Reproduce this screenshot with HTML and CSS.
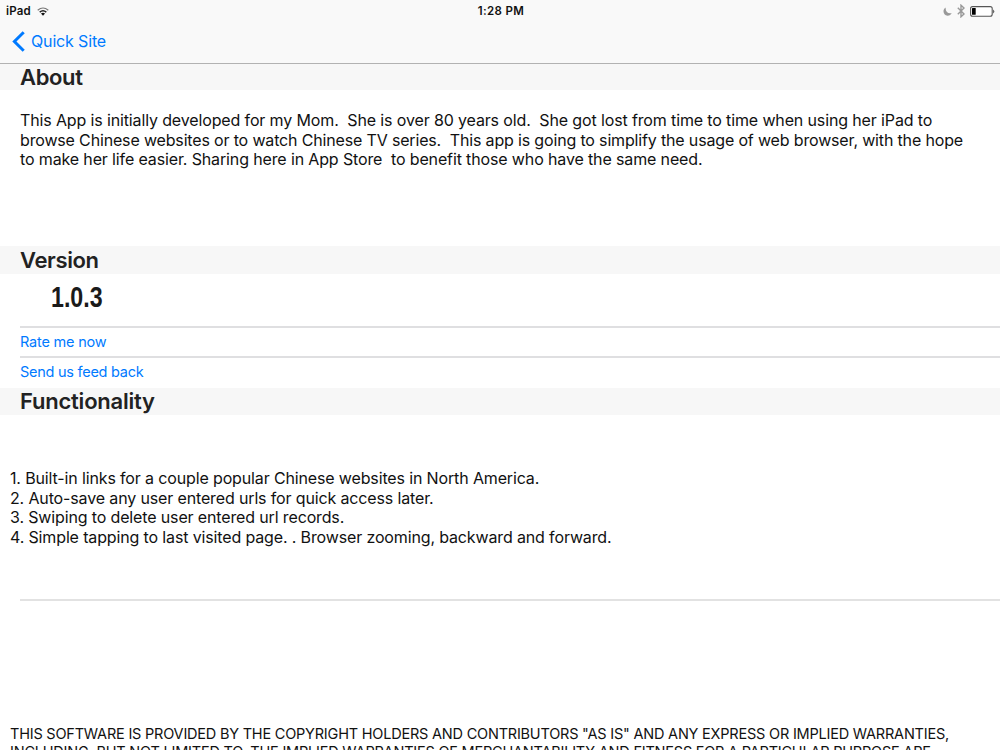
FILE: index.html
```
<!DOCTYPE html>
<html lang="en">
<head>
<meta charset="utf-8">
<title>About</title>
<link rel="stylesheet" href="styles.css">
</head>
<body>
<header class="top">
  <div class="status">
    <div class="left"><span class="device">iPad</span>
      <svg class="wifi" width="12" height="9" viewBox="0 0 12 9"><path d="M.7 3.3Q6-1.3 11.3 3.3" fill="none" stroke="#777" stroke-width="1.2"/><path d="M2.7 5.1Q6 2.3 9.3 5.1" fill="none" stroke="#222" stroke-width="1.4"/><path d="M4 6.6Q6 5 8 6.6L6 8.8Z" fill="#111"/></svg>
    </div>
    <span class="time">1:28 PM</span>
    <div class="right">
      <svg class="moon" width="9" height="9" viewBox="0 0 9 9"><path d="M2.8 .4C-.8 2 -.2 8.6 4.6 8.7C6.6 8.7 8 7.6 8.7 6C5 7 2 4.4 2.8 .4Z" fill="#999"/></svg>
      <svg class="bt" width="8" height="14" viewBox="0 0 8 14"><path d="M.8 3.8L7 10L4 12.8V1.2L7 4L.8 10.2" fill="none" stroke="#999" stroke-width="1.4"/></svg>
      <svg class="battery" width="25" height="11" viewBox="0 0 25 11"><rect x=".6" y=".6" width="21.6" height="9.6" rx="2" fill="#fff" stroke="#555" stroke-width="1.1"/><rect x="2" y="2" width="3.7" height="6.8" rx=".5" fill="#000"/><path d="M23.2 3.4Q25.4 5.4 23.2 7.4Z" fill="#444"/></svg>
    </div>
  </div>
  <nav class="nav"><svg width="13" height="21" viewBox="0 0 13 21"><path d="M11.7 1.2L2.4 10.5L11.7 19.8" fill="none" stroke="#007aff" stroke-width="3"/></svg><span class="back">Quick Site</span></nav>
</header>
<main>
  <h2 class="head about"><span>About</span></h2>
  <div class="intro"><div class="i1">This App is initially developed for my Mom.&nbsp; She is over 80 years old.&nbsp; She got lost from time to time when using her iPad to</div><div class="i2">browse Chinese websites or to watch Chinese TV series.&nbsp; This app is going to simplify the usage of web browser, with the hope</div><div class="i3">to make her life easier. Sharing here in App Store&nbsp; to benefit those who have the same need.</div></div>
  <h2 class="head version"><span>Version</span></h2>
  <div class="number"><span>1.0.3</span></div>
  <a class="row rate">Rate me now</a>
  <a class="row send">Send us feed back</a>
  <h2 class="head func"><span>Functionality</span></h2>
  <div class="features"><div>1. Built-in links for a couple popular Chinese websites in North America.</div><div>2. Auto-save any user entered urls for quick access later.</div><div>3. Swiping to delete user entered url records.</div><div>4. Simple tapping to last visited page. . Browser zooming, backward and forward.</div></div>
  <div class="license"><div>THIS SOFTWARE IS PROVIDED BY THE COPYRIGHT HOLDERS AND CONTRIBUTORS "AS IS" AND ANY EXPRESS OR IMPLIED WARRANTIES,</div><div>INCLUDING, BUT NOT LIMITED TO, THE IMPLIED WARRANTIES OF MERCHANTABILITY AND FITNESS FOR A PARTICULAR PURPOSE ARE</div></div>
</main>
</body>
</html>
```
FILE: styles.css
```
* { box-sizing: border-box; }
body { margin: 0; height: 750px; overflow: hidden; background: #fff; color: #111; font: 16px/19.5px Inter, sans-serif; }
.top { height: 64px; background: #f9f9f9; border-bottom: 1px solid #b2b2b2; }
.status { height: 22px; display: grid; grid-template-columns: 1fr auto 1fr; align-items: center; font-size: 11.5px; font-weight: 600; padding: 0 5px 0 6px; }
.left, .right { display: flex; align-items: center; gap: 6px; }
.device, .time { padding-top: 1px; }
.device { letter-spacing: .2px; }
.time { letter-spacing: .35px; padding-left: 1px; }
.right { justify-content: flex-end; gap: 5px; }
.nav { height: 39px; padding-left: 12px; display: flex; align-items: center; gap: 6px; color: #007aff; letter-spacing: -.15px; }
.head { margin: 0; height: 27px; background: #f7f7f7; padding-left: 20px; font-size: 22px; font-weight: 600; line-height: 27px; color: #222; letter-spacing: -.35px; }
.about { height: 26px; line-height: 26px; }
.version { height: 28px; line-height: 28px; }
.func { letter-spacing: -.22px; }
.intro { height: 156px; padding: 21px 0 0 20px; white-space: nowrap; letter-spacing: -.135px; }
.i2 { letter-spacing: -.16px; }
.number { height: 52px; padding: 9px 0 0 51px; font: bold 29px/28px "Liberation Sans", sans-serif; color: #1a1a1a; }
.number span { display: inline-block; transform: scaleX(.8); transform-origin: left; }
.row { display: block; margin-left: 20px; height: 30px; border-top: 2px solid #dfdfe1; font-size: 14.5px; line-height: 28px; color: #007aff; letter-spacing: -.2px; }
.send { height: 32px; letter-spacing: -.26px; }
.features { height: 184px; padding: 54px 0 0 10px; white-space: nowrap; letter-spacing: -.14px; }
.license { margin-left: 20px; border-top: 2px solid #e2e2e2; padding-top: 124px; white-space: nowrap; font-size: 14.5px; line-height: 17.5px; letter-spacing: -.21px; }
.license div { margin-left: -10px; }
```
